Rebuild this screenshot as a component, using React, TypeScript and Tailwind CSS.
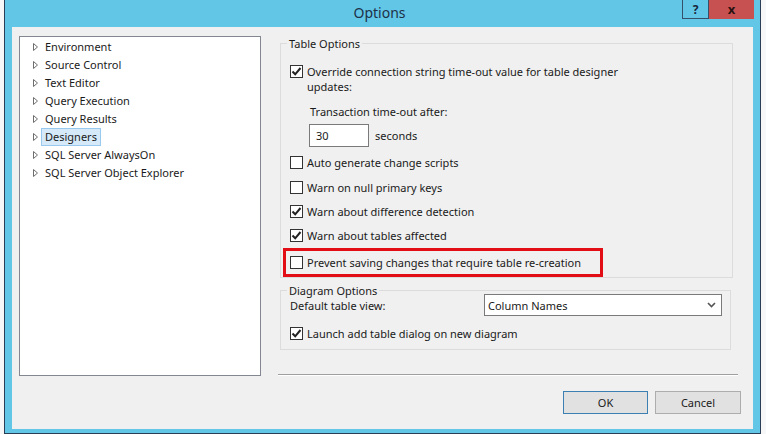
import React from 'react';

const treeItems = [
  'Environment',
  'Source Control',
  'Text Editor',
  'Query Execution',
  'Query Results',
  'Designers',
  'SQL Server AlwaysOn',
  'SQL Server Object Explorer',
];

const Arrow = () => (
  <svg width="7" height="10" viewBox="0 0 7 10" className="shrink-0">
    <path d="M1.5 1.5 L5.5 5 L1.5 8.5 Z" fill="none" stroke="#6e6e6e" strokeWidth="1" />
  </svg>
);

const CheckBox: React.FC<{ checked?: boolean }> = ({ checked }) => (
  <span className="mt-[1px] flex h-[13px] w-[13px] shrink-0 items-center justify-center border border-[#333333] bg-white">
    {checked && (
      <svg width="11" height="11" viewBox="0 0 11 11">
        <path d="M1.5 5.5 L4.2 8.3 L9.5 2" fill="none" stroke="#222" strokeWidth="2" />
      </svg>
    )}
  </span>
);

const CheckRow: React.FC<{ checked?: boolean; className?: string; children: React.ReactNode }> = ({
  checked,
  className,
  children,
}) => (
  <div className={'flex items-start gap-[4px] ' + (className ?? '')}>
    <CheckBox checked={checked} />
    <span className="whitespace-nowrap">{children}</span>
  </div>
);

export default function App() {
  return (
    <div
      className="flex h-[434px] w-[766px] overflow-hidden bg-white text-[11px] leading-[15px] text-[#1a1a1a]"
      style={{ fontFamily: '"Noto Sans", "Open Sans", sans-serif' }}
    >
      <div className="w-[4px] shrink-0 bg-[#f7f7f7]" />

      {/* window */}
      <div className="flex h-[434px] w-[757px] shrink-0 flex-col border-x border-b border-[#2c3e55] bg-[#62c6e7]">
        {/* title bar */}
        <div className="grid h-[27px] shrink-0 grid-cols-[1fr_auto_1fr] pr-[6px]">
          <div />
          <div className="pt-[4px] text-[14px] leading-[18px] text-[#1d3147]">Options</div>
          <div className="flex items-start justify-end">
            <div className="flex h-[19px] w-[27px] items-center justify-center border-x border-b border-[#35506a] text-[12px] font-bold text-[#16283a]">
              ?
            </div>
            <div className="flex h-[19px] w-[45px] items-center justify-center bg-[#c75050] text-[13px] font-bold text-[#2a1212]">
              x
            </div>
          </div>
        </div>

        {/* client area */}
        <div className="mx-[7px] flex h-[402px] shrink-0 flex-col bg-[#f0f0f0]">
          <div className="flex pl-[7px] pt-[9px]">
            {/* tree */}
            <div className="h-[340px] w-[242px] shrink-0 border border-[#828790] bg-white pt-[1px]">
              {treeItems.map((item) => (
                <div key={item} className="flex h-[18px] items-center pl-[12px]">
                  <Arrow />
                  <span
                    className={
                      'ml-[2px] px-[3px] leading-[16px] ' +
                      (item === 'Designers'
                        ? 'border border-[#99c9ef] bg-[#d5e9f9]'
                        : 'border border-transparent')
                    }
                  >
                    {item}
                  </span>
                </div>
              ))}
            </div>

            {/* right side */}
            <div className="ml-[17px] flex h-[340px] w-[460px] flex-col">
              <fieldset className="ml-[2px] w-[453px] border border-[#dcdcdc] pb-0 pl-[9px]">
                <legend className="ml-[-3px] px-[2px]">Table Options</legend>
                <CheckRow checked className="mt-[13px]">
                  Override connection string time-out value for table designer
                  <br />
                  updates:
                </CheckRow>
                <div className="ml-[20px] mt-[10px]">Transaction time-out after:</div>
                <div className="ml-[19px] mt-[5px] flex items-center">
                  <div className="flex h-[23px] w-[60px] items-center border border-[#7a7a7a] bg-white pl-[6px]">30</div>
                  <span className="ml-[6px]">seconds</span>
                </div>
                <CheckRow className="mt-[8px]">Auto generate change scripts</CheckRow>
                <CheckRow className="mt-[10px]">Warn on null primary keys</CheckRow>
                <CheckRow checked className="mt-[9px]">
                  Warn about difference detection
                </CheckRow>
                <CheckRow checked className="mt-[9px]">
                  Warn about tables affected
                </CheckRow>
                <div className="ml-[-7px] mt-[5px] w-[320px] border-[3px] border-[#e30d16] pb-[4px] pl-[4px] pt-[4px]">
                  <CheckRow>Prevent saving changes that require table re-creation</CheckRow>
                </div>
              </fieldset>

              <fieldset className="ml-[2px] mt-[6px] w-[451px] border border-[#dcdcdc] pb-[8px] pl-[9px]">
                <legend className="ml-[-3px] px-[2px] leading-[13px]">Diagram Options</legend>
                <div className="mt-[-3px] flex h-[22px] items-center">
                  <span className="w-[194px]">Default table view:</span>
                  <div className="flex h-[22px] w-[238px] items-center justify-between border border-[#7a7a7a] bg-white pl-[3px] pr-[5px]">
                    <span>Column Names</span>
                    <svg width="9" height="6" viewBox="0 0 9 6">
                      <path d="M1 1 L4.5 4.5 L8 1" fill="none" stroke="#555" strokeWidth="1.6" />
                    </svg>
                  </div>
                </div>
                <CheckRow checked className="mt-[10px]">
                  Launch add table dialog on new diagram
                </CheckRow>
              </fieldset>

              <div className="mt-auto border-b border-t border-b-white border-t-[#a0a0a0]" />
            </div>
          </div>

          {/* buttons */}
          <div className="mt-[15px] flex justify-end gap-[7px] pr-[12px]">
            <button className="flex h-[23px] w-[85px] items-center justify-center border border-[#3c7fb1] bg-[#e1e1e1]">
              OK
            </button>
            <button className="flex h-[23px] w-[86px] items-center justify-center border border-[#adadad] bg-[#e1e1e1]">
              Cancel
            </button>
          </div>
        </div>
      </div>

      <div className="flex-1 bg-[#f7f7f7]" />
    </div>
  );
}
